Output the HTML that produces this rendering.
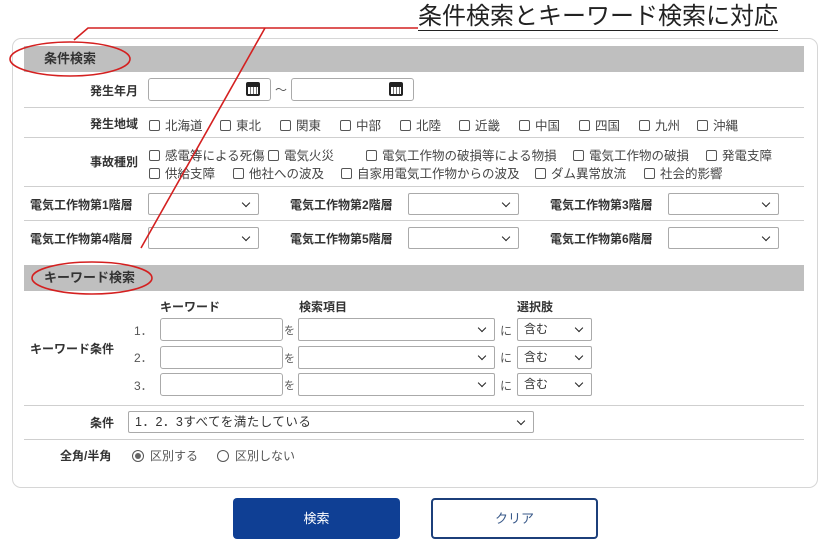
<!DOCTYPE html>
<html><head><meta charset="utf-8">
<style>
*{margin:0;padding:0;box-sizing:border-box}
body{width:835px;height:541px;background:#fff;position:relative;overflow:hidden;font-family:"Liberation Sans","Noto Sans CJK JP",sans-serif;font-size:12px;color:#333}
.a{position:absolute;white-space:nowrap}
.panel{position:absolute;left:12px;top:38px;width:806px;height:450px;border:1px solid #d6d6d6;border-radius:9px}
.bar{position:absolute;left:24px;width:780px;height:26px;background:#bfbfbf;font-weight:bold;font-size:13px;line-height:26px;padding-left:20px;color:#333}
.hl{position:absolute;left:24px;width:780px;height:1px;background:#cfcfcf}
.lb{position:absolute;font-weight:bold;text-align:right;white-space:nowrap;color:#333}
.in{position:absolute;border:1px solid #aaa;border-radius:3px;background:#fff}
.sel{position:absolute;border:1px solid #aaa;border-radius:2px;background:#fff;font-size:12px;line-height:20px;padding-left:6px}
.sel::after{content:"";position:absolute;right:9px;top:6px;width:5px;height:5px;border-right:1.6px solid #222;border-bottom:1.6px solid #222;transform:rotate(45deg)}
.cb{position:absolute;white-space:nowrap;color:#444;font-size:12.5px}
.cb i{display:inline-block;width:11px;height:11px;border:1px solid #555;border-radius:2px;vertical-align:-1px;margin-right:5px}
.cal{position:absolute;width:14px;height:14px;border:2px solid #222;border-radius:2px;background:repeating-linear-gradient(90deg,#fff 0 2px,#777 2px 3px)}
.cal::before{content:"";position:absolute;left:0;right:0;top:0;height:3px;background:#222}
</style></head><body>
<div class="a" style="left:418px;top:3px;font-size:24px;color:#222;border-bottom:1px solid #222;line-height:27px">条件検索とキーワード検索に対応</div>
<div class="panel"></div>
<div class="bar" style="top:46px">条件検索</div>
<div class="bar" style="top:265px">キーワード検索</div>

<div class="lb" style="left:60px;width:78px;top:82px">発生年月</div>
<div class="in" style="left:148px;top:78px;width:123px;height:23px"></div>
<div class="cal" style="left:246px;top:82px"></div>
<div class="a" style="left:275px;top:81px;color:#555">～</div>
<div class="in" style="left:291px;top:78px;width:123px;height:23px"></div>
<div class="cal" style="left:389px;top:82px"></div>
<div class="hl" style="top:107px"></div>

<div class="lb" style="left:60px;width:78px;top:115px">発生地域</div>
<div class="cb" style="left:149px;top:115px"><i></i>北海道</div>
<div class="cb" style="left:220px;top:115px"><i></i>東北</div>
<div class="cb" style="left:280px;top:115px"><i></i>関東</div>
<div class="cb" style="left:340px;top:115px"><i></i>中部</div>
<div class="cb" style="left:400px;top:115px"><i></i>北陸</div>
<div class="cb" style="left:459px;top:115px"><i></i>近畿</div>
<div class="cb" style="left:519px;top:115px"><i></i>中国</div>
<div class="cb" style="left:579px;top:115px"><i></i>四国</div>
<div class="cb" style="left:639px;top:115px"><i></i>九州</div>
<div class="cb" style="left:697px;top:115px"><i></i>沖縄</div>
<div class="hl" style="top:137px"></div>

<div class="lb" style="left:60px;width:78px;top:153px">事故種別</div>
<div class="cb" style="left:149px;top:145px"><i></i>感電等による死傷</div>
<div class="cb" style="left:268px;top:145px"><i></i>電気火災</div>
<div class="cb" style="left:366px;top:145px"><i></i>電気工作物の破損等による物損</div>
<div class="cb" style="left:573px;top:145px"><i></i>電気工作物の破損</div>
<div class="cb" style="left:706px;top:145px"><i></i>発電支障</div>
<div class="cb" style="left:149px;top:163px"><i></i>供給支障</div>
<div class="cb" style="left:233px;top:163px"><i></i>他社への波及</div>
<div class="cb" style="left:341px;top:163px"><i></i>自家用電気工作物からの波及</div>
<div class="cb" style="left:535px;top:163px"><i></i>ダム異常放流</div>
<div class="cb" style="left:644px;top:163px"><i></i>社会的影響</div>
<div class="hl" style="top:186px"></div>

<div class="lb" style="left:30px;top:196px">電気工作物第1階層</div>
<div class="sel" style="left:148px;top:193px;width:111px;height:22px"></div>
<div class="lb" style="left:290px;top:196px">電気工作物第2階層</div>
<div class="sel" style="left:408px;top:193px;width:111px;height:22px"></div>
<div class="lb" style="left:550px;top:196px">電気工作物第3階層</div>
<div class="sel" style="left:668px;top:193px;width:111px;height:22px"></div>
<div class="hl" style="top:220px"></div>
<div class="lb" style="left:30px;top:230px">電気工作物第4階層</div>
<div class="sel" style="left:148px;top:227px;width:111px;height:22px"></div>
<div class="lb" style="left:290px;top:230px">電気工作物第5階層</div>
<div class="sel" style="left:408px;top:227px;width:111px;height:22px"></div>
<div class="lb" style="left:550px;top:230px">電気工作物第6階層</div>
<div class="sel" style="left:668px;top:227px;width:111px;height:22px"></div>

<div class="lb" style="left:160px;top:298px">キーワード</div>
<div class="lb" style="left:299px;top:298px">検索項目</div>
<div class="lb" style="left:517px;top:298px">選択肢</div>
<div class="lb" style="left:30px;top:340px">キーワード条件</div>

<div class="a" style="left:134px;top:322px;color:#555">1．</div>
<div class="in" style="left:160px;top:318px;width:123px;height:23px"></div>
<div class="a" style="left:284px;top:322px;font-size:11px;color:#555">を</div>
<div class="sel" style="left:298px;top:318px;width:197px;height:23px"></div>
<div class="a" style="left:500px;top:322px;color:#555">に</div>
<div class="sel" style="left:517px;top:318px;width:75px;height:23px">含む</div>

<div class="a" style="left:134px;top:349px;color:#555">2．</div>
<div class="in" style="left:160px;top:346px;width:123px;height:23px"></div>
<div class="a" style="left:284px;top:350px;font-size:11px;color:#555">を</div>
<div class="sel" style="left:298px;top:346px;width:197px;height:23px"></div>
<div class="a" style="left:500px;top:349px;color:#555">に</div>
<div class="sel" style="left:517px;top:346px;width:75px;height:23px">含む</div>

<div class="a" style="left:134px;top:377px;color:#555">3．</div>
<div class="in" style="left:160px;top:373px;width:123px;height:23px"></div>
<div class="a" style="left:284px;top:377px;font-size:11px;color:#555">を</div>
<div class="sel" style="left:298px;top:373px;width:197px;height:23px"></div>
<div class="a" style="left:500px;top:377px;color:#555">に</div>
<div class="sel" style="left:517px;top:373px;width:75px;height:23px">含む</div>
<div class="hl" style="top:405px"></div>

<div class="lb" style="left:90px;top:414px">条件</div>
<div class="sel" style="left:128px;top:411px;width:406px;height:22px;font-size:12.5px;letter-spacing:.5px">1．2．3すべてを満たしている</div>
<div class="hl" style="top:439px"></div>
<div class="lb" style="left:60px;top:447px">全角/半角</div>
<div class="a" style="left:132px;top:447px;color:#555"><span style="display:inline-block;width:12px;height:12px;border:1px solid #555;border-radius:50%;vertical-align:-2px;margin-right:6px;position:relative"><span style="position:absolute;left:2px;top:2px;width:6px;height:6px;border-radius:50%;background:#666"></span></span>区別する</div>
<div class="a" style="left:217px;top:447px;color:#555"><span style="display:inline-block;width:12px;height:12px;border:1px solid #555;border-radius:50%;vertical-align:-2px;margin-right:6px"></span>区別しない</div>

<div class="a" style="left:233px;top:498px;width:167px;height:41px;background:#0f3f94;border-radius:4px;color:#fff;text-align:center;line-height:41px;font-size:13px">検索</div>
<div class="a" style="left:431px;top:498px;width:167px;height:41px;border:2px solid #1c3f7a;border-radius:4px;color:#3a5a8a;text-align:center;line-height:37px;font-size:13px;background:#fff">クリア</div>

<svg class="a" style="left:0;top:0" width="835" height="541">
<g fill="none" stroke="#d42020" stroke-width="1.6">
<path d="M418 28 L88 28 L74 40"/>
<path d="M265 28 L141 248"/>
<ellipse cx="70" cy="59" rx="60" ry="17"/>
<ellipse cx="92" cy="278" rx="60" ry="16"/>
</g></svg>
</body></html>
